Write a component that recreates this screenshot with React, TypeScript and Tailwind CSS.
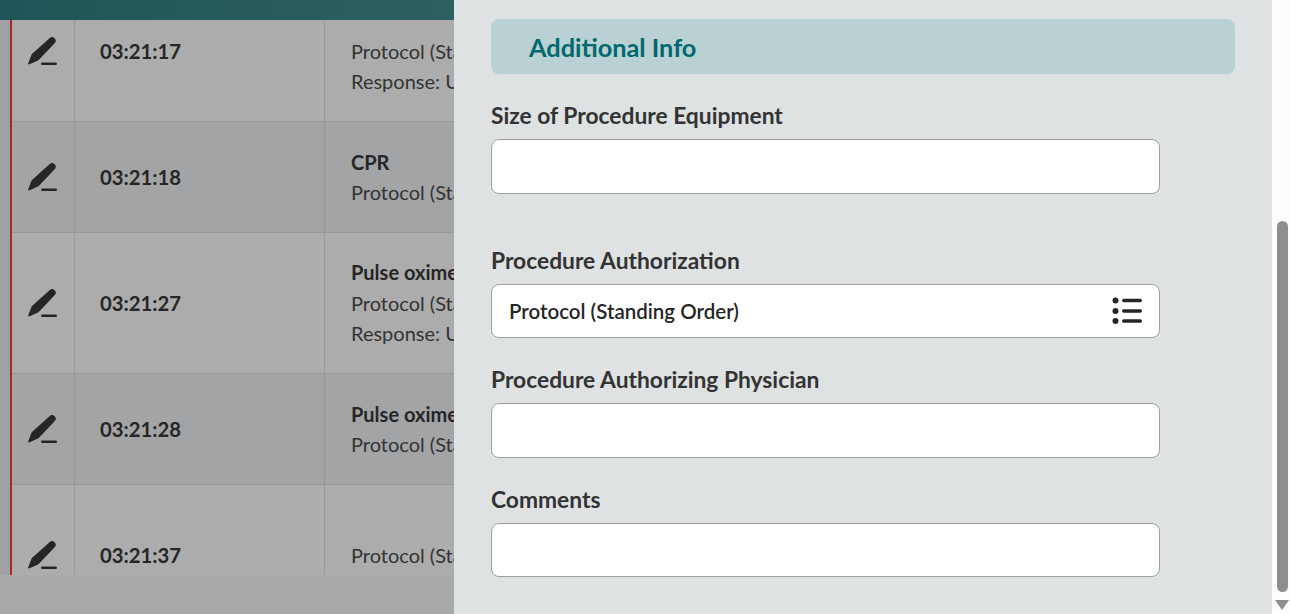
import React from "react";

const rows = [
  { time: "03:21:17", title: "", lines: ["Protocol (Standing Order)", "Response: Unchanged"], rowClass: "h-[141px] -mt-[39px] bg-[#acacac]" },
  { time: "03:21:18", title: "CPR", lines: ["Protocol (Standing Order)"], rowClass: "h-[111px] bg-[#a3a4a6]" },
  { time: "03:21:27", title: "Pulse oximetry", lines: ["Protocol (Standing Order)", "Response: Unchanged"], rowClass: "h-[141px] bg-[#acacac]" },
  { time: "03:21:28", title: "Pulse oximetry", lines: ["Protocol (Standing Order)"], rowClass: "h-[111px] bg-[#a3a4a6]" },
  { time: "03:21:37", title: "", lines: ["Protocol (Standing Order)"], rowClass: "h-[141px] bg-[#acacac]", center: true },
];

function PenIcon() {
  return (
    <svg width="30" height="29" viewBox="0 0 30 29" className="text-[#262626]">
      <path
        d="M21.500 1.200a3.600 3.600 0 0 1 5.100 5.100L10.500 23.300 1.600 27.300c-.9.400-1.600-.2-1.400-1.100L3.700 17.300z"
        fill="currentColor"
      />
      <rect x="13" y="25.500" width="16" height="2.600" rx="1.300" fill="currentColor" />
    </svg>
  );
}

function ListIcon() {
  return (
    <svg width="30" height="28" viewBox="0 0 30 28" className="text-[#262626]">
      <circle cx="3.500" cy="3.500" r="3" fill="currentColor" />
      <circle cx="3.500" cy="14" r="3" fill="currentColor" />
      <circle cx="3.500" cy="24" r="3" fill="currentColor" />
      <rect x="10" y="1.800" width="20" height="3.400" rx="1.700" fill="currentColor" />
      <rect x="10" y="12.300" width="20" height="3.400" rx="1.700" fill="currentColor" />
      <rect x="10" y="22.300" width="20" height="3.400" rx="1.700" fill="currentColor" />
    </svg>
  );
}

function Row({ row }: { row: (typeof rows)[number] }) {
  return (
    <div className={`flex shrink-0 border-b border-[#979899] ${row.rowClass}`}>
      <div className="flex w-[63px] shrink-0 items-center justify-center border-r border-[#979899] pr-[1px]">
        <PenIcon />
      </div>
      <div className="flex w-[250px] shrink-0 items-center border-r border-[#979899] pl-[25px] text-[20.300px] font-bold leading-none text-[#262626]">
        {row.time}
      </div>
      <div className="flex min-w-0 flex-1 flex-col justify-center overflow-hidden whitespace-nowrap pl-[26px] text-[20px] leading-[30.500px] text-[#333]">
        {row.title ? (
          <div className="font-bold text-[#262626]">{row.title}</div>
        ) : row.center ? null : (
          <div>&nbsp;</div>
        )}
        {row.lines.map((line) => (
          <div key={line}>{line}</div>
        ))}
      </div>
    </div>
  );
}

function Field({
  label,
  value,
  labelClass,
  boxClass,
}: {
  label: string;
  value?: string;
  labelClass: string;
  boxClass: string;
}) {
  return (
    <div className={labelClass}>
      <div className="text-[22.800px] font-bold leading-[28px] text-[#333]">{label}</div>
      <div className={`flex w-[669px] items-center justify-between rounded-[8px] border border-[#a0a0a0] bg-white pl-[17px] pr-[17px] ${boxClass}`}>
        <span className="text-[20.500px] font-semibold text-[#262626]">{value}</span>
        {value && <ListIcon />}
      </div>
    </div>
  );
}

export default function App() {
  return (
    <div className="flex h-[614px] w-[1290px] overflow-hidden bg-white font-['Lato',sans-serif]">
      <div className="flex h-full w-[454px] shrink-0 flex-col bg-[#a8a9ab]">
        <div className="relative z-10 h-[20px] shrink-0 bg-gradient-to-r from-[#1f5558] to-[#2f5f60]" />
        <div className="flex h-[555px] shrink-0">
          <div className="w-[10px] shrink-0 bg-[#a0a1a3]" />
          <div className="flex min-w-0 flex-1 flex-col overflow-hidden border-l-2 border-[#a52a2a]">
            {rows.map((row) => (
              <Row key={row.time} row={row} />
            ))}
          </div>
        </div>
      </div>

      <div className="h-full w-[818px] shrink-0 bg-[#dee2e3] pl-[37px] pt-[19px]">
        <div className="flex h-[55px] w-[744px] items-center rounded-[8px] bg-[#bad1d3] pl-[38px] pt-[2px] text-[25.300px] font-bold text-[#00686e]">
          Additional Info
        </div>
        <Field label="Size of Procedure Equipment" labelClass="mt-[27px]" boxClass="mt-[10px] h-[55px]" />
        <Field label="Procedure Authorization" value="Protocol (Standing Order)" labelClass="mt-[52px]" boxClass="mt-[10px] h-[54px]" />
        <Field label="Procedure Authorizing Physician" labelClass="mt-[27px]" boxClass="mt-[10px] h-[55px]" />
        <Field label="Comments" labelClass="mt-[27px]" boxClass="mt-[10px] h-[54px]" />
      </div>

      <div className="flex h-full w-[18px] shrink-0 flex-col items-center bg-[#fdfdfd] pl-[2px] pt-[221px]">
        <div className="h-[371px] w-[11px] rounded-full bg-[#8e8e8e]" />
        <div className="mt-[8px] h-0 w-0 border-x-[7px] border-t-[10px] border-x-transparent border-t-[#8e8e8e]" />
      </div>
    </div>
  );
}
